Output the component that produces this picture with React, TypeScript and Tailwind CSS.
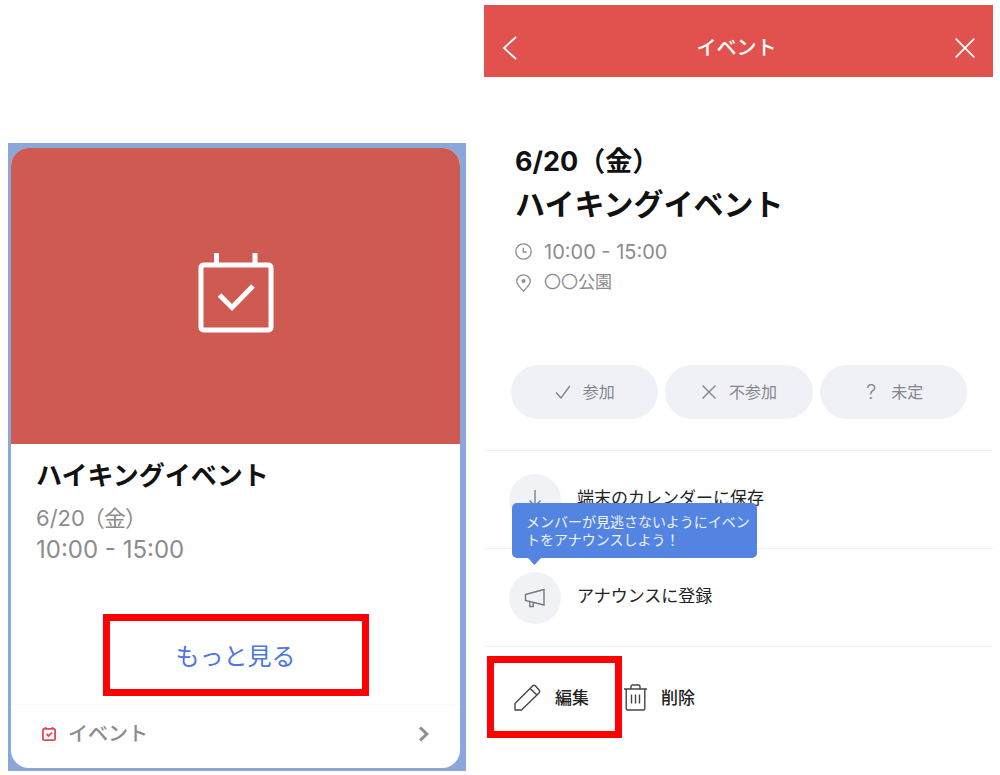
import type { ReactNode } from "react";

function CalendarCheck() {
  return (
    <svg width="76" height="82" viewBox="0 0 76 82" fill="none" stroke="#fff" strokeWidth="5" aria-hidden="true">
      <rect x="3" y="13" width="70" height="65" rx="2.5" />
      <path d="M18.5 1v12M57 1v12" />
      <path d="M21.500 43 L34 55.500 L55 34" />
    </svg>
  );
}

function MiniCalendar() {
  return (
    <svg width="14" height="14" viewBox="0 0 14 14" fill="none" stroke="#dc4a58" strokeWidth="1.8" aria-hidden="true">
      <rect x="0.9" y="1.8" width="12.200" height="11.300" rx="1.200" />
      <path d="M3.500 0v2M10.500 0v2M4.600 7l1.900 1.900L10 5.600" />
    </svg>
  );
}

function EventCard() {
  return (
    <section className="mt-[138px] h-[628px] bg-[#8ba7d9] pt-[5px] pr-[6px] pb-[3px] pl-[3px]">
      <article className="flex h-full flex-col overflow-hidden rounded-[18px] bg-white">
        <div className="flex h-[296px] items-center justify-center bg-[#cf5a51] pb-[6px]">
          <CalendarCheck />
        </div>
        <div className="px-[25px] pt-[14px]">
          <h2 className="text-[26px] leading-[36px] font-bold text-[#111]">ハイキングイベント</h2>
          <p className="mt-2 text-[22px] leading-[32px] text-[#8c8c8c]">
            6/20<span className="ml-2 [font-feature-settings:'palt']">（金）</span>
          </p>
          <p className="text-[24px] leading-[32px] text-[#8c8c8c]">10:00 - 15:00</p>
        </div>
        <button
          type="button"
          className="mx-auto mt-12 h-[82px] w-[266px] border-[7px] border-[#fe0000] pt-[3px] text-[24px] text-[#4c76e2]"
        >
          もっと見る
        </button>
        <a href="#event" className="mt-2 flex flex-1 items-center border-t border-[#fafafa] pr-[30px] pb-[6px] pl-[25px]">
          <span className="flex size-[26px] items-center justify-center rounded-full border border-[#f5f9fb]">
            <MiniCalendar />
          </span>
          <span className="ml-[6px] flex-1 text-[20px] font-medium text-[#8c8c8c]">イベント</span>
          <svg width="12" height="16" viewBox="0 0 12 16" fill="none" stroke="#8f8f8f" strokeWidth="3" aria-hidden="true">
            <path d="M2 1.500L8.800 8L2 14.500" />
          </svg>
        </a>
      </article>
    </section>
  );
}

function Answer({ icon, children }: { icon: ReactNode; children: ReactNode }) {
  return (
    <button
      type="button"
      className="flex h-[54px] flex-1 items-center justify-center gap-3 rounded-full bg-[#f0f1f6] text-[16px] text-[#85868b]"
    >
      {icon}
      <span>{children}</span>
    </button>
  );
}

function ActionRow({ icon, children }: { icon: ReactNode; children: ReactNode }) {
  return (
    <button
      type="button"
      className="flex h-[98px] w-full items-center gap-4 border-t border-[#f1f1f3] pl-[25px] text-left text-[17px] text-[#222]"
    >
      <span className="flex size-[52px] items-center justify-center rounded-full bg-[#f1f2f6]">{icon}</span>
      <span className="pb-[2px]">{children}</span>
    </button>
  );
}

function EventDetail() {
  return (
    <section>
      <header className="flex h-[72px] items-center justify-between bg-[#e1524e] px-[18px] pt-[14px] text-white">
        <button type="button" aria-label="戻る">
          <svg width="16" height="24" viewBox="0 0 16 24" fill="none" stroke="#fff" strokeWidth="1.800" aria-hidden="true">
            <path d="M14 1L2 12L14 23" />
          </svg>
        </button>
        <h1 className="text-[20px] font-medium">イベント</h1>
        <button type="button" aria-label="閉じる">
          <svg width="20" height="20" viewBox="0 0 20 20" fill="none" stroke="#fff" strokeWidth="1.800" aria-hidden="true">
            <path d="M0.700 0.700L19.300 19.300M19.300 0.700L0.700 19.300" />
          </svg>
        </button>
      </header>

      <div className="px-[31px] pt-[62px]">
        <h2 className="text-[30px] leading-[42px] font-bold text-[#111]">
          <span className="text-[27px]">6/20（金）</span>
          <br />
          ハイキングイベント
        </h2>
        <ul className="mt-[11px] text-[#8b8b8e]">
          <li className="flex h-[31px] items-center gap-3 text-[20px]">
            <svg width="17" height="17" viewBox="0 0 17 17" fill="none" stroke="#8d8d90" strokeWidth="1.300" aria-hidden="true">
              <circle cx="8.500" cy="8.500" r="7.700" />
              <path d="M8.300 4.800v4.200h3.500" />
            </svg>
            10:00 - 15:00
          </li>
          <li className="flex h-[31px] items-center gap-3 text-[17px]">
            <svg width="17" height="18" viewBox="0 0 17 18" fill="none" stroke="#8d8d90" strokeWidth="1.300" aria-hidden="true">
              <path d="M8.500 17.200C5 13.500 1.700 10.500 1.700 7.300a6.800 6.500 0 0 1 13.600 0c0 3.200-3.300 6.200-6.800 9.900z" />
              <circle cx="8.500" cy="7" r="2" fill="#8d8d90" stroke="none" />
            </svg>
            〇〇公園
          </li>
        </ul>
      </div>

      <div className="mt-[67px] mb-[31px] flex gap-[7px] pr-[26px] pl-[27px]">
        <Answer
          icon={
            <svg width="16" height="14" viewBox="0 0 16 14" fill="none" stroke="#808186" strokeWidth="1.300" aria-hidden="true">
              <path d="M1 7.500L6 13L14.800 1" />
            </svg>
          }
        >
          参加
        </Answer>
        <Answer
          icon={
            <svg width="16" height="14" viewBox="0 0 16 14" fill="none" stroke="#808186" strokeWidth="1.300" aria-hidden="true">
              <path d="M1.500 0.500L14.500 13.500M14.500 0.500L1.500 13.500" />
            </svg>
          }
        >
          不参加
        </Answer>
        <Answer icon={<span className="w-4 text-center text-[20px] font-light">?</span>}>未定</Answer>
      </div>

      <ActionRow
        icon={
          <svg width="16" height="22" viewBox="0 0 16 22" fill="none" stroke="#75767b" strokeWidth="1.300" aria-hidden="true">
            <path d="M8 1v16M2.500 11.500L8 17L13.500 11.500" />
          </svg>
        }
      >
        端末のカレンダーに保存
      </ActionRow>
      <div className="relative">
        <ActionRow
          icon={
            <svg width="22" height="20" viewBox="0 0 22 20" fill="none" stroke="#77787d" strokeWidth="1.400" aria-hidden="true">
              <path d="M1.500 6.500L20 1.500V17L1.500 12.500zM5.800 13.500V18.500H9.200V14.500" />
            </svg>
          }
        >
          アナウンスに登録
        </ActionRow>
        <div
          role="tooltip"
          className="absolute -top-[45px] left-[28px] w-[245px] rounded-[5px] bg-[#5484e2] pt-[10px] pr-[6px] pb-[9px] pl-[14px] text-[14px] leading-[18px] whitespace-nowrap text-[#eef3fd]"
        >
          メンバーが見逃さないようにイベン
          <br />
          トをアナウンスしよう！
          <svg className="absolute top-full left-[16px]" width="13" height="7" viewBox="0 0 13 7" fill="#5484e2" aria-hidden="true">
            <path d="M0 0H13L6.500 7z" />
          </svg>
        </div>
      </div>

      <div className="flex items-center border-t border-[#f1f1f3] pt-[9px] pl-[3px] text-[17px] font-medium text-[#222]">
        <button type="button" className="flex h-[82px] w-[135px] items-center gap-[14px] border-[7px] border-[#fe0000] pl-[20px]">
          <svg width="27" height="27" viewBox="0 0 27 27" fill="none" stroke="#444" strokeWidth="1.400" strokeLinejoin="round" aria-hidden="true">
            <path d="M1 26V19.500L18.500 2Q20 0.500 21.500 2L25 6Q26.300 7.500 25 9L7.500 26zM16 4.500L23 11" />
          </svg>
          <span className="pt-[3px]">編集</span>
        </button>
        <button type="button" className="ml-[2px] flex items-center gap-[14px]">
          <svg width="23" height="27" viewBox="0 0 23 27" fill="none" stroke="#444" strokeWidth="1.400" aria-hidden="true">
            <path d="M0 5H23M2.200 5V24.500Q2.200 26 3.700 26H19.300Q20.800 26 20.800 24.500V5M7 5V2.500Q7 1 8.500 1H14.500Q16 1 16 2.500V5M7.500 10.500V19.500M11.500 10.500V19.500M15.500 10.500V19.500" />
          </svg>
          <span className="pt-[3px]">削除</span>
        </button>
      </div>
    </section>
  );
}

export default function App() {
  return (
    <main className="grid grid-cols-[458fr_509fr] items-start gap-[18px] bg-white pt-[5px] pr-[7px] pl-2 font-['Inter','Noto_Sans_CJK_JP',sans-serif]">
      <EventCard />
      <EventDetail />
    </main>
  );
}
